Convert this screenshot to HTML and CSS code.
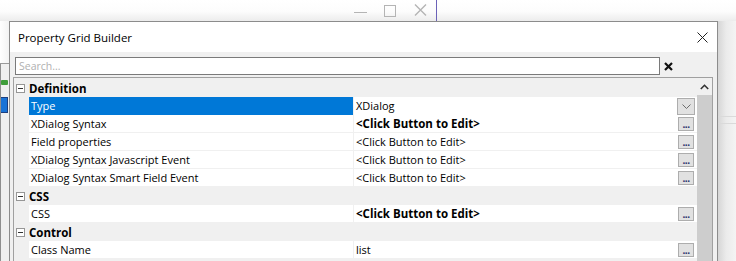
FILE: index.html
```html
<!DOCTYPE html>
<html lang="en">
<head>
    <meta charset="UTF-8">
    <title>Property Grid Builder</title>
    <link rel="stylesheet" href="styles.css">
</head>
<body>
<div class="behind-bar">
    <div class="behind-window">
        <span class="wbtn"><span class="wmin"></span></span>
        <span class="wbtn"><span class="wmax"></span></span>
        <span class="wbtn">
            <svg width="13" height="12" viewBox="0 0 13 12"><path d="M1 0.5 L12 11.5 M12 0.5 L1 11.5" stroke="#b4b4b4" stroke-width="1.4" fill="none"/></svg>
        </span>
    </div>
</div>
<div class="stage">
    <div class="left-strip">
        <div class="ls-top"></div>
        <div class="ls-panel">
            <span class="ls-icon"></span>
            <span class="ls-sel"></span>
        </div>
    </div>
    <div class="dialog">
        <div class="titlebar">
            <span class="title">Property Grid Builder</span>
            <svg class="close" width="11" height="11" viewBox="0 0 11 11"><path d="M0.5 0.5 L10.5 10.5 M10.5 0.5 L0.5 10.5" stroke="#222" stroke-width="1" fill="none"/></svg>
        </div>
        <div class="body">
            <div class="search-row">
                <input class="search" type="text" placeholder="Search...">
                <svg class="clear" width="9" height="9" viewBox="0 0 9 9"><path d="M1 1 L8 8 M8 1 L1 8" stroke="#111" stroke-width="2.2" fill="none"/></svg>
            </div>
            <div class="grid">
                <div class="rows">
                    <div class="cat"><span class="toggle"></span>Definition</div>
                    <div class="prop selected">
                        <span class="gutter"></span>
                        <span class="name">Type</span>
                        <span class="value">XDialog</span>
                        <span class="cell"><span class="drop"><svg width="9" height="5" viewBox="0 0 9 5"><path d="M0.5 0.5 L4.5 4.5 L8.5 0.5" stroke="#6d6d6d" fill="none"/></svg></span></span>
                    </div>
                    <div class="prop">
                        <span class="gutter"></span>
                        <span class="name">XDialog Syntax</span>
                        <span class="value bold">&lt;Click Button to Edit&gt;</span>
                        <span class="cell"><span class="dots">...</span></span>
                    </div>
                    <div class="prop">
                        <span class="gutter"></span>
                        <span class="name">Field properties</span>
                        <span class="value">&lt;Click Button to Edit&gt;</span>
                        <span class="cell"><span class="dots">...</span></span>
                    </div>
                    <div class="prop">
                        <span class="gutter"></span>
                        <span class="name">XDialog Syntax Javascript Event</span>
                        <span class="value">&lt;Click Button to Edit&gt;</span>
                        <span class="cell"><span class="dots">...</span></span>
                    </div>
                    <div class="prop">
                        <span class="gutter"></span>
                        <span class="name">XDialog Syntax Smart Field Event</span>
                        <span class="value">&lt;Click Button to Edit&gt;</span>
                        <span class="cell"><span class="dots">...</span></span>
                    </div>
                    <div class="cat"><span class="toggle"></span>CSS</div>
                    <div class="prop">
                        <span class="gutter"></span>
                        <span class="name">CSS</span>
                        <span class="value bold">&lt;Click Button to Edit&gt;</span>
                        <span class="cell"><span class="dots">...</span></span>
                    </div>
                    <div class="cat"><span class="toggle"></span>Control</div>
                    <div class="prop">
                        <span class="gutter"></span>
                        <span class="name">Class Name</span>
                        <span class="value">list</span>
                        <span class="cell"><span class="dots">...</span></span>
                    </div>
                </div>
                <div class="scrollbar">
                    <div class="sb-arrow"><svg width="9" height="6" viewBox="0 0 9 6"><path d="M0.8 5 L4.5 1.3 L8.2 5" stroke="#333" stroke-width="1.6" fill="none"/></svg></div>
                    <div class="sb-thumb"></div>
                </div>
            </div>
        </div>
    </div>
    <div class="right-strip">
        <div class="rs-line one"></div>
        <div class="rs-line two"></div>
    </div>
</div>
</body>
</html>
```

FILE: styles.css
```css
body {
    margin: 0;
    width: 736px;
    height: 261px;
    overflow: hidden;
    background-color: #ffffff;
    font-family: "Open Sans", "Noto Sans", sans-serif;
    font-size: 11px;
    color: #000;
}

/* window sitting behind the dialog */
.behind-bar {
    height: 21px;
    background: linear-gradient(#ffffff, #fcfcfc 55%, #ececec);
}

.behind-window {
    width: 437px;
    height: 21px;
    box-sizing: border-box;
    border-right: 1px solid #6b62b8;
    display: flex;
    justify-content: flex-end;
    padding-right: 1px;
}

.wbtn {
    width: 30px;
    height: 19px;
    display: flex;
    align-items: center;
    justify-content: center;
}

.wmin {
    width: 13px;
    height: 1px;
    background-color: #b4b4b4;
    margin-top: 6px;
}

.wmax {
    width: 10px;
    height: 10px;
    border: 1px solid #b4b4b4;
    margin-top: 2px;
}

.stage {
    display: flex;
    height: 240px;
}

.left-strip {
    width: 9px;
    display: flex;
    flex-direction: column;
}

.ls-top {
    height: 42px;
    background: linear-gradient(90deg, #ffffff, #f3f3f3);
    border-bottom: 1px solid #9a9a9a;
}

.ls-panel {
    flex: 1;
    background-color: #f0f0f0;
    border-left: 1px solid #8f8f8f;
    display: flex;
    flex-direction: column;
}

.ls-icon {
    width: 7px;
    height: 5px;
    margin-top: 16px;
    background-color: #3f9d3a;
    border-radius: 1px;
}

.ls-sel {
    width: 6px;
    height: 14px;
    margin-top: 12px;
    background-color: #1a73d6;
    border: 1px solid #1c3f80;
    border-left: none;
}

.right-strip {
    flex: 1;
    background: linear-gradient(90deg, #d6d6d6, #ebebeb 45%, #f4f4f4);
    display: flex;
    flex-direction: column;
}

.rs-line {
    height: 1px;
    background-color: #dadada;
}

.rs-line.one {
    margin-top: 95px;
}

.rs-line.two {
    margin-top: 6px;
}

/* dialog */
.dialog {
    width: 709px;
    height: 240px;
    box-sizing: border-box;
    border: 1px solid #8c8c8c;
    border-bottom: none;
    display: flex;
    flex-direction: column;
    background-color: #f0f0f0;
}

.titlebar {
    height: 30px;
    background-color: #ffffff;
    display: flex;
    align-items: center;
    justify-content: space-between;
    padding: 0 9px 0 8px;
}

.title {
    font-size: 11.5px;
}

.close {
    display: block;
}

.body {
    flex: 1;
    padding: 5px 4px 0 3px;
    display: flex;
    flex-direction: column;
}

.search-row {
    display: flex;
    align-items: center;
    height: 18px;
    padding-left: 2px;
}

.search {
    width: 645px;
    height: 18px;
    box-sizing: border-box;
    border: 1px solid #7a7a7a;
    padding: 0 3px;
    font-family: "Open Sans", "Noto Sans", sans-serif;
    font-size: 10.5px;
    outline: none;
}

.search::placeholder {
    color: #b0b0b0;
}

.clear {
    margin-left: 4px;
    display: block;
}

/* property grid */
.grid {
    margin-top: 2px;
    flex: 1;
    border: 1px solid #a0a0a0;
    border-bottom: none;
    display: flex;
    background-color: #f0f0f0;
}

.rows {
    width: 683px;
    padding-top: 1px;
}

.cat {
    height: 18px;
    display: flex;
    align-items: center;
    font-weight: bold;
    font-size: 11.5px;
}

.toggle {
    width: 9px;
    height: 9px;
    box-sizing: border-box;
    border: 1px solid #969696;
    background-color: #fff;
    margin: 0 4px 0 2px;
    position: relative;
}

.toggle::after {
    content: "";
    position: absolute;
    left: 1px;
    top: 3px;
    width: 5px;
    height: 1px;
    background-color: #333;
}

.prop {
    height: 18px;
    display: grid;
    grid-template-columns: 15px 324px 323px 21px;
    box-sizing: border-box;
    border-bottom: 1px solid #f0f0f0;
}

.gutter {
    background-color: #f0f0f0;
}

.name,
.value {
    background-color: #ffffff;
    padding-left: 2px;
    line-height: 18px;
    white-space: nowrap;
    overflow: hidden;
}

.value {
    border-left: 1px solid #f0f0f0;
}

.bold {
    font-weight: bold;
    font-size: 11.5px;
}

.prop.selected .name {
    background-color: #0078d7;
    color: #ffffff;
}

.cell {
    background-color: #ffffff;
    display: flex;
    align-items: center;
    padding-left: 2px;
}

.dots {
    width: 16px;
    height: 14px;
    box-sizing: border-box;
    border: 1px solid #adadad;
    background-color: #e1e1e1;
    color: #27306a;
    font-size: 10px;
    font-weight: bold;
    line-height: 13px;
    text-align: center;
    letter-spacing: -0.5px;
}

.drop {
    width: 18px;
    height: 17px;
    box-sizing: border-box;
    border: 1px solid #adadad;
    background-color: #e1e1e1;
    display: flex;
    align-items: center;
    justify-content: center;
    margin-left: -1px;
    margin-top: 1px;
}

.drop svg {
    display: block;
}

.scrollbar {
    width: 16px;
    display: flex;
    flex-direction: column;
    background-color: #f0f0f0;
}

.sb-arrow {
    height: 17px;
    display: flex;
    align-items: center;
    justify-content: center;
}

.sb-thumb {
    flex: 1;
    background-color: #cdcdcd;
}
```
